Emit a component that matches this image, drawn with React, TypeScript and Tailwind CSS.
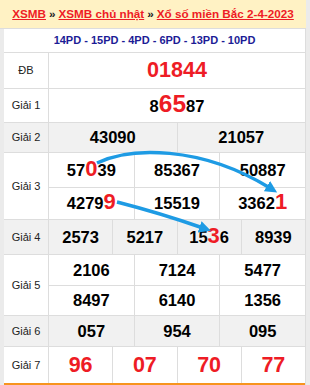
import React from "react";

const B = "border-[#dddddd]";
const RED = "text-[#ee1c25]";

function Hl({ children, size = "text-[22px]" }: { children: React.ReactNode; size?: string }) {
  return <span className={`${RED} ${size} leading-none`}>{children}</span>;
}

function Row({
  label,
  gray,
  children,
  h,
}: {
  label: string;
  gray?: boolean;
  children: React.ReactNode;
  h: string;
}) {
  return (
    <div className={`flex border-b ${B} ${gray ? "bg-[#f1f1f1]" : "bg-white"} ${h}`}>
      <div
        className={`w-[45px] shrink-0 border-r ${B} flex items-center justify-center text-[11px] text-[#222]`}
      >
        {label}
      </div>
      <div className="flex-1 flex flex-col min-w-0">{children}</div>
    </div>
  );
}

function Cells({
  items,
  cls = "",
  last,
  h = "",
}: {
  items: React.ReactNode[];
  cls?: string;
  last?: boolean;
  h?: string;
}) {
  return (
    <div className={`flex flex-1 ${last ? "" : `border-b ${B}`} ${h}`}>
      {items.map((it, i) => (
        <div
          key={i}
          className={`flex-1 basis-0 flex items-center justify-center font-bold text-[16.5px] text-black ${
            i < items.length - 1 ? `border-r ${B}` : ""
          } ${cls}`}
        >
          {it}
        </div>
      ))}
    </div>
  );
}

export default function App() {
  return (
    <div
      className="relative w-[310px] h-[385px] bg-[#ebebeb] overflow-hidden"
      style={{ fontFamily: '"Liberation Sans", Arial, sans-serif' }}
    >
      <div className={`w-[306px] h-[29px] bg-[#fff2c4] border-b ${B} flex items-center justify-center text-[11.7px] font-bold`}>
        <span className="text-[#ee1c25] underline">XSMB</span>
        <span className="text-[#222] mx-[3px]">»</span>
        <span className="text-[#ee1c25] underline">XSMB chủ nhật</span>
        <span className="text-[#222] mx-[3px]">»</span>
        <span className="text-[#ee1c25] underline">Xổ số miền Bắc 2-4-2023</span>
      </div>
      <div className={`ml-[4px] w-[302px] bg-white border-r ${B}`}>
        <div className={`h-[24px] border-b ${B} flex items-center justify-center text-[11px] font-bold text-[#1c1c96]`}>
          14PD - 15PD - 4PD - 6PD - 13PD - 10PD
        </div>
        <Row label="ĐB" h="h-[36px]">
          <Cells last items={[<span className={`${RED} text-[21.6px]`}>01844</span>]} />
        </Row>
        <Row label="Giải 1" h="h-[34px]">
          <Cells
            last
            items={[
              <span className="flex items-baseline">
                8<Hl size="text-[24.5px]">65</Hl>87
              </span>,
            ]}
          />
        </Row>
        <Row label="Giải 2" gray h="h-[30px]">
          <Cells last items={["43090", "21057"]} />
        </Row>
        <Row label="Giải 3" h="h-[67px]">
          <Cells
            h="h-[35px] flex-none"
            items={[
              <span className="flex items-baseline">
                57<Hl>0</Hl>39
              </span>,
              "85367",
              "50887",
            ]}
          />
          <Cells
            last
            items={[
              <span className="flex items-baseline">
                4279<Hl>9</Hl>
              </span>,
              "15519",
              <span className="flex items-baseline">
                3362<Hl>1</Hl>
              </span>,
            ]}
          />
        </Row>
        <Row label="Giải 4" gray h="h-[35px]">
          <Cells
            last
            items={[
              "2573",
              "5217",
              <span className="flex items-baseline">
                15<Hl>3</Hl>6
              </span>,
              "8939",
            ]}
          />
        </Row>
        <Row label="Giải 5" h="h-[61px]">
          <Cells h="h-[31px] flex-none" items={["2106", "7124", "5477"]} />
          <Cells last items={["8497", "6140", "1356"]} />
        </Row>
        <Row label="Giải 6" gray h="h-[31px]">
          <Cells last items={["057", "954", "095"]} />
        </Row>
        <div className="border-b-2 border-[#f7941d]">
          <div className={`flex bg-white h-[36px]`}>
            <div className={`w-[45px] shrink-0 border-r ${B} flex items-center justify-center text-[11px] text-[#222]`}>
              Giải 7
            </div>
            <div className="flex-1 flex">
              <Cells
                last
                cls={`${RED} !text-[#ee1c25] text-[21.5px]`}
                items={["96", "07", "70", "77"]}
              />
            </div>
          </div>
        </div>
      </div>

      <svg
        className="absolute left-0 top-0 pointer-events-none"
        width="310"
        height="385"
        viewBox="0 0 310 385"
      >
        <defs>
          <marker
            id="ah"
            viewBox="0 0 10 10"
            refX="3"
            refY="5"
            markerWidth="12"
            markerHeight="12"
            markerUnits="userSpaceOnUse"
            orient="auto"
          >
            <path d="M0,0 L10,5 L0,10 z" fill="#1e9be4" />
          </marker>
        </defs>
        <path
          d="M97 163 C130 147, 200 145, 270 188"
          stroke="#1e9be4"
          strokeWidth="3.5"
          fill="none"
          markerEnd="url(#ah)"
        />
        <path
          d="M117 202 Q160 213, 203 228"
          stroke="#1e9be4"
          strokeWidth="3.5"
          fill="none"
          markerEnd="url(#ah)"
        />
      </svg>
    </div>
  );
}
